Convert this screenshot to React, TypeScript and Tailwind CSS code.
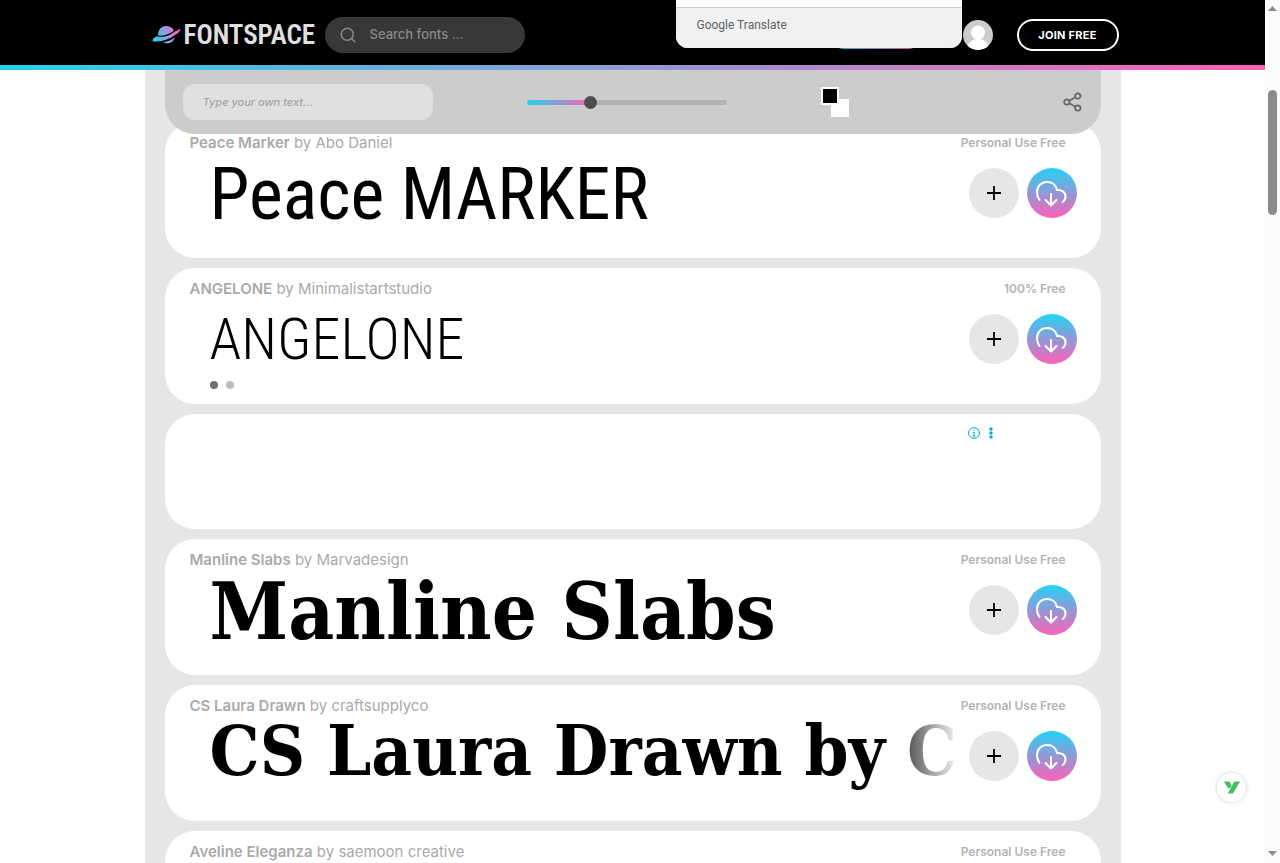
import { FiSearch } from "react-icons/fi";

type Font = {
  name: string;
  author: string;
  license: string;
  sample: string;
  sampleClass: string;
  pages?: number;
};

const fonts: Font[] = [
  {
    name: "Peace Marker",
    author: "Abo Daniel",
    license: "Personal Use Free",
    sample: "Peace MARKER",
    sampleClass: "font-['Roboto_Condensed',sans-serif] text-[72px] leading-[84px]",
  },
  {
    name: "ANGELONE",
    author: "Minimalistartstudio",
    license: "100% Free",
    sample: "ANGELONE",
    sampleClass: "font-['Roboto_Condensed',sans-serif] font-light text-[58px] leading-[80px]",
    pages: 2,
  },
  {
    name: "Manline Slabs",
    author: "Marvadesign",
    license: "Personal Use Free",
    sample: "Manline Slabs",
    sampleClass: "font-['DejaVu_Serif_Condensed','DejaVu_Serif',serif] font-bold text-[79px] leading-[84px]",
  },
  {
    name: "CS Laura Drawn",
    author: "craftsupplyco",
    license: "Personal Use Free",
    sample: "CS Laura Drawn by Craftsupplyco",
    sampleClass: "font-['DejaVu_Serif_Condensed','DejaVu_Serif',serif] font-bold text-[70px] leading-[70px]",
  },
  {
    name: "Aveline Eleganza",
    author: "saemoon creative",
    license: "Personal Use Free",
    sample: "Aveline Eleganza",
    sampleClass: "font-['Liberation_Serif',serif] text-[58px] leading-[84px]",
  },
];

function PlanetLogo() {
  return (
    <svg width="30" height="20" viewBox="0 0 30 20" aria-hidden="true">
      <defs>
        <linearGradient id="planet" gradientUnits="userSpaceOnUse" x1="2" y1="16" x2="27" y2="5">
          <stop offset="0" stopColor="#22d3f5" />
          <stop offset="0.5" stopColor="#8f9fe0" />
          <stop offset="1" stopColor="#ff5fb8" />
        </linearGradient>
      </defs>
      <g fill="url(#planet)">
        <path d="M6 10.500C6 4.500 9.500 1 14 1c3.500 0 6.500 1.600 8 4.500C19 8.500 12 11.300 6 10.500z" />
        <path d="M5 11.300c6 1.500 13-.5 17.500-4.500l6-3c-.5 3.500-3 5-5.500 6.300C17 14.800 8 17.300.5 16.300c0-2.500 2-4 4.500-5z" />
        <path d="M11 17.300c5-.8 9-2.600 12-5.100-1 4.700-7 8-12 5.100z" />
      </g>
    </svg>
  );
}

function DownloadIcon() {
  return (
    <svg
      width="50"
      height="50"
      viewBox="0 0 50 50"
      fill="none"
      stroke="white"
      strokeWidth="2"
      strokeLinecap="round"
      strokeLinejoin="round"
      aria-hidden="true"
    >
      <path d="M12.500 32C11 30 10 27 10 24c0-6 4.500-10 10-10 5.300 0 9.200 3.200 10 8 4.500-.5 8.500 2 8.500 6.500 0 2.500-1 4.200-2.800 5.500" />
      <path d="M24 26v11.500M18.500 32l5.500 5.500 5.500-5.500" />
    </svg>
  );
}

function ShareIcon() {
  return (
    <svg width="19" height="20" viewBox="0 0 19 20" fill="none" stroke="#666" strokeWidth="1.700" aria-hidden="true">
      <circle cx="3.800" cy="10" r="2.700" />
      <circle cx="14.800" cy="4" r="2.700" />
      <circle cx="14.800" cy="16" r="2.700" />
      <path d="M6.200 8.700l6.200-3.400M6.200 11.300l6.200 3.400" />
    </svg>
  );
}

function Header() {
  return (
    <header className="relative z-20 bg-black">
      <div className="relative mx-auto flex h-[65px] max-w-[976px] items-center pt-[5px] pr-[2px] pl-[7px]">
        <a href="#home" className="flex items-center gap-[2px]">
          <PlanetLogo />
          <span className="w-[131px] font-['Roboto_Condensed',sans-serif] text-[27px] leading-8 font-semibold text-[#e0e0e0]">
            FONTSPACE
          </span>
        </a>
        <label className="ml-[10px] flex h-9 w-[200px] items-center rounded-full bg-[#383838] pl-[14px]">
          <FiSearch size={18} className="shrink-0 text-[#888]" />
          <input
            type="search"
            aria-label="Search fonts"
            placeholder="Search fonts ..."
            className="ml-[13px] w-full min-w-0 bg-transparent text-[13px] font-medium text-white outline-none placeholder:text-[#888]"
          />
        </label>
        <div className="ml-auto flex items-center">
          <span className="mr-[41px] h-7 w-[92px] rounded-full bg-linear-to-r/srgb from-[#22d3ee] to-[#ff5fb8]" />
          <a href="#account" aria-label="Account">
            <svg width="30" height="30" viewBox="0 0 30 30">
              <clipPath id="avatar">
                <circle cx="15" cy="15" r="15" />
              </clipPath>
              <g clipPath="url(#avatar)">
                <path fill="#ccc" d="M0 0h30v30H0z" />
                <circle cx="15" cy="12.500" r="7" fill="white" />
                <ellipse cx="15" cy="27.500" rx="10.500" ry="8.500" fill="white" />
              </g>
            </svg>
          </a>
          <button className="ml-6 h-8 w-[102px] rounded-full border-2 border-white text-[11px] font-bold tracking-wide text-white">
            JOIN FREE
          </button>
        </div>
        {/* translate popup hanging from the top of the window */}
        <div className="absolute top-0 right-[159px] w-[286px] overflow-hidden rounded-b-xl bg-white pt-[7px] shadow-md">
          <div className="h-[41px] border-t border-[#ccc] bg-[#f1f1f1] pt-[7px] pl-[21px] font-['Roboto',sans-serif] text-[12px] leading-5 text-[#5f6368]">
            Google Translate
          </div>
        </div>
      </div>
      <div className="h-[5px] bg-linear-to-r/srgb from-[#22d3ee] to-[#ff5fb8]" />
    </header>
  );
}

function Toolbar() {
  return (
    <div className="relative z-10 flex h-16 items-center gap-[94px] rounded-b-[30px] bg-[#ccc] pr-[19px] pl-[18px]">
      <input
        type="text"
        aria-label="Type your own text"
        placeholder="Type your own text..."
        className="h-9 w-[250px] rounded-xl bg-[#e0e0e0] px-5 text-[11px] font-medium italic outline-none placeholder:text-[#a5a5a5]"
      />
      <input
        type="range"
        aria-label="Font size"
        min={0}
        max={100}
        defaultValue={31}
        className="h-[5px] w-[200px] appearance-none rounded-full bg-[linear-gradient(to_right,#22d3ee_0%,#ff5fb8_32%,#b3b3b3_32%)] [&::-webkit-slider-thumb]:h-[13px] [&::-webkit-slider-thumb]:w-[13px] [&::-webkit-slider-thumb]:appearance-none [&::-webkit-slider-thumb]:rounded-full [&::-webkit-slider-thumb]:bg-[#4d4d4d]"
      />
      <div className="flex items-start">
        <button aria-label="Text color" className="relative z-10 size-[18px] border-2 border-white bg-black" />
        <button aria-label="Background color" className="mt-3 -ml-2 size-[18px] bg-white" />
      </div>
      <button aria-label="Share" className="ml-auto">
        <ShareIcon />
      </button>
    </div>
  );
}

function FontCard({ font }: { font: Font }) {
  return (
    <article className="min-h-[136px] rounded-[30px] bg-white pt-[11px] pr-6 pl-[25px]">
      <div className="flex h-5 items-center justify-between pr-[11px] text-[#aaa]">
        <h2 className="text-[15px] leading-5">
          <a href="#font" className="font-semibold">{font.name}</a>
          {" by "}
          <a href="#author">{font.author}</a>
        </h2>
        <span className="text-[12px] leading-5 font-semibold text-[#b3b3b3]">{font.license}</span>
      </div>
      <div className="flex h-20 items-center gap-2">
        <div className="relative h-20 min-w-0 flex-1 overflow-hidden pl-5">
          <p className={`whitespace-nowrap text-black ${font.sampleClass}`}>{font.sample}</p>
          <div className="absolute inset-y-0 right-0 w-14 bg-linear-to-r from-white/30 to-white" />
        </div>
        <button aria-label="Add to collection" className="flex size-[50px] items-center justify-center rounded-full bg-[#e6e6e6]">
          <svg width="14" height="14" viewBox="0 0 14 14" stroke="black" strokeWidth="1.800" aria-hidden="true">
            <path d="M7 0v14M0 7h14" />
          </svg>
        </button>
        <button aria-label="Download" className="size-[50px] rounded-full bg-linear-to-b/srgb from-[#22d3f5] to-[#ff5fb8]">
          <DownloadIcon />
        </button>
      </div>
      {font.pages && (
        <div className="flex gap-2 pt-[2px] pl-5">
          <button aria-label="Style 1" className="size-2 rounded-full bg-[#707070]" />
          <button aria-label="Style 2" className="size-2 rounded-full bg-[#bdbdbd]" />
        </div>
      )}
    </article>
  );
}

function AdCard() {
  return (
    <aside className="flex h-[115px] justify-end gap-[9px] rounded-[30px] bg-white pt-[13px] pr-[108px]">
      <svg width="12" height="12" viewBox="0 0 12 12" fill="none" stroke="#00aecd" aria-hidden="true">
        <circle cx="6" cy="6" r="5.400" />
        <path d="M6 5v4.200M4.800 5.400H6M4.500 9.200h3M6 2.600v1.200" />
      </svg>
      <svg width="4" height="12" viewBox="0 0 4 12" fill="#00aecd" aria-hidden="true">
        <circle cx="2" cy="2" r="1.700" />
        <circle cx="2" cy="6" r="1.700" />
        <circle cx="2" cy="10" r="1.700" />
      </svg>
    </aside>
  );
}

function Scrollbar() {
  return (
    <div className="flex w-[15px] flex-col items-center bg-[#fcfcfc] pt-[6px] pb-[7px]">
      <svg width="9" height="5" viewBox="0 0 9 5" fill="#8b8b8b">
        <path d="M4.500 0L9 5H0z" />
      </svg>
      <div className="mt-[79px] h-[125px] w-[9px] rounded-full bg-[#8b8b8b]" />
      <svg className="mt-auto" width="9" height="5" viewBox="0 0 9 5" fill="#8b8b8b">
        <path d="M4.500 5L9 0H0z" />
      </svg>
    </div>
  );
}

export default function App() {
  return (
    <div className="flex h-screen overflow-hidden bg-white font-['Inter',sans-serif]">
      <div className="flex min-w-0 flex-1 flex-col">
        <Header />
        <main className="mx-auto min-h-0 w-full max-w-[976px] flex-1 overflow-hidden bg-[#e6e6e6] px-5">
          <Toolbar />
          <div className="-mt-3 flex flex-col gap-[10px]">
            <FontCard font={fonts[0]} />
            <FontCard font={fonts[1]} />
            <AdCard />
            {fonts.slice(2).map((font) => (
              <FontCard key={font.name} font={font} />
            ))}
          </div>
        </main>
      </div>
      <Scrollbar />
      <button
        aria-label="Open extension"
        className="fixed right-[34px] bottom-[61px] flex size-[29px] items-center justify-center rounded-full bg-white shadow-[0_0_4px_rgba(0,0,0,0.2)]"
      >
        <svg width="16" height="13" viewBox="0 0 16 13" fill="#3cc45f">
          <path d="M0 .5h4.500c1 0 1.500.4 1.800 1.200L7.500 5 6 7.200C4 7.200 3.400 6.500 2.800 5.200z" />
          <path d="M11.500.5H16L9.800 11c-.6 1-1.200 1.500-2.300 1.500H3.800L9.500 2c.5-1 1-1.500 2-1.500z" />
        </svg>
      </button>
    </div>
  );
}
